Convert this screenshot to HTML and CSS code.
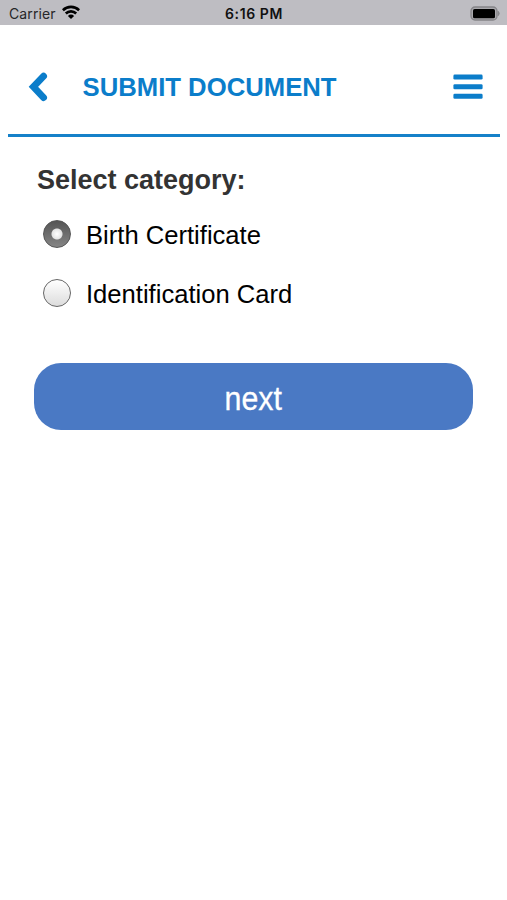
FILE: index.html
```html
<!DOCTYPE html>
<html lang="en">
<head>
<meta charset="utf-8">
<title>Submit Document</title>
<link rel="stylesheet" href="styles.css">
</head>
<body>
<div class="status">
  <div class="status-left"><span class="carrier">Carrier</span>
    <svg class="wifi" width="18" height="14" viewBox="0 0 18 14" fill="none" stroke="#000" stroke-width="2.6">
      <path d="M.9 5.2a11.6 11.6 0 0 1 16.2 0M3.8 8.5a7.4 7.4 0 0 1 10.4 0"/>
      <path d="M9 13.9 5.9 10.9a4.4 4.4 0 0 1 6.2 0Z" fill="#000" stroke="none"/>
    </svg>
  </div>
  <span class="time">6:16 PM</span>
  <svg class="battery" width="31" height="15" viewBox="0 0 31 15">
    <rect x="1" y="1" width="26" height="13" rx="4" fill="#aaa9ad" stroke="#858488" stroke-width="1.3"/>
    <rect x="3" y="3" width="22" height="9.3" rx="1.6" fill="#000"/>
    <path d="M28.2 5.2q2.4 2.2 0 4.6Z" fill="#858488" stroke="#858488" stroke-width=".6"/>
  </svg>
</div>
<header class="header">
  <svg class="back" width="20" height="30" viewBox="0 0 20 30" fill="none" stroke="#0b7dca" stroke-width="6.8" stroke-linecap="round" stroke-linejoin="miter"><path d="M15.6 4.2 5.4 14.8l10.2 10.8"/></svg>
  <h1 class="title">SUBMIT DOCUMENT</h1>
  <svg class="menu" width="30" height="26" viewBox="0 0 30 26" fill="#0b7dca"><rect x=".4" y=".6" width="29.2" height="5" rx="1.3"/><rect x=".4" y="10.2" width="29.2" height="5" rx="1.3"/><rect x=".4" y="19.8" width="29.2" height="5" rx="1.3"/></svg>
</header>
<main class="content">
  <h2 class="heading">Select category:</h2>
  <label class="option"><input class="radio" type="radio" name="category" checked><span>Birth Certificate</span></label>
  <label class="option"><input class="radio" type="radio" name="category"><span>Identification Card</span></label>
  <button class="next"><span class="next-label">next</span></button>
</main>
</body>
</html>
```
FILE: styles.css
```css
* { box-sizing: border-box; }
body {
  margin: 0;
  min-height: 900px;
  background: #fff;
  color: #000;
  font-family: "Liberation Sans", Arial, sans-serif;
}
.status {
  display: grid;
  grid-template-columns: 1fr auto 1fr;
  align-items: center;
  height: 25px;
  padding: 2px 6px 0 9px;
  background: #bebdc2;
  font-family: Inter, sans-serif;
  font-size: 14px;
  line-height: 23px;
}
.status-left { display: flex; align-items: center; gap: 6px; }
.carrier { color: #262628; letter-spacing: .1px; }
.wifi { margin-top: -3px; }
.time { margin-left: -2px; font-weight: 600; color: #111; letter-spacing: .6px; }
.battery { justify-self: end; margin-top: -1px; }
.header {
  display: flex;
  align-items: center;
  height: 112px;
  margin: 0 7px 0 8px;
  padding: 14px 17px 0 20px;
  border-bottom: 3px solid #1581c9;
}
.title {
  flex: 1;
  margin: 0 0 0 34.5px;
  color: #0b7dca;
  font-size: 25.7px;
  line-height: 30px;
}
.content {
  display: flex;
  flex-direction: column;
  padding: 27px 34px 0;
}
.heading {
  margin: 0 0 16px 3px;
  color: #333;
  font-size: 27px;
  line-height: 32px;
}
.option {
  display: flex;
  align-items: center;
  height: 48px;
  margin: 0 0 11px 9px;
  font-size: 25.6px;
}
.option:first-of-type { margin-top: -1px; }
.radio {
  appearance: none;
  width: 28px;
  height: 28px;
  margin: -2px 15px 0 0;
  border: 1.5px solid #666;
  border-radius: 50%;
  background: linear-gradient(#fff, #dcdcdc);
}
.radio:checked {
  border-color: #555;
  background: radial-gradient(circle, #fff 0, #e4e4e4 5px, transparent 6px), linear-gradient(#555, #858585);
}
.next {
  height: 67px;
  margin-top: 34px;
  padding: 4px 0 0;
  border: 0;
  border-radius: 27px;
  background: #4a79c4;
  color: #fff;
  font-family: inherit;
  font-size: 33px;
}
.next-label { display: inline-block; transform: scaleX(.92); -webkit-text-stroke: .3px #fff; }
```
